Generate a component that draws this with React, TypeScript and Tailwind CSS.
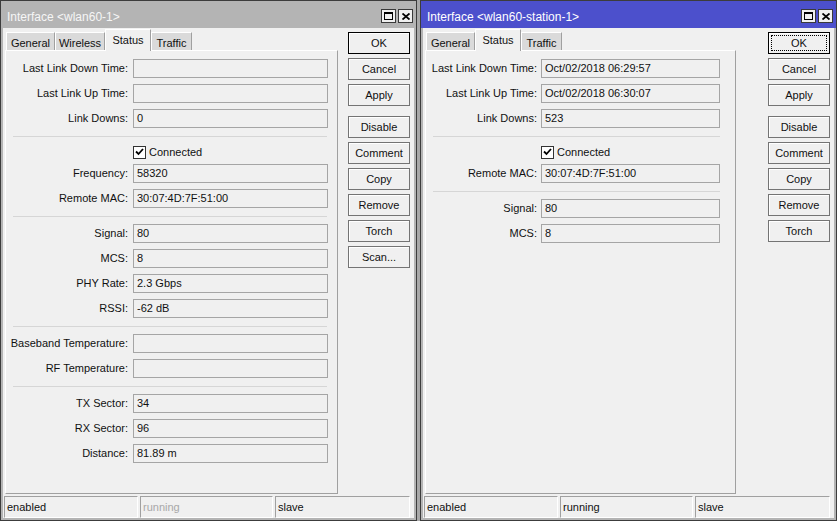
import React from "react";

type Row =
  | { kind: "field"; label: string; value: string }
  | { kind: "sep" }
  | { kind: "check"; label: string };

const f = (label: string, value = ""): Row => ({ kind: "field", label, value });
const sep: Row = { kind: "sep" };

const leftRows: Row[] = [
  f("Last Link Down Time:"),
  f("Last Link Up Time:"),
  f("Link Downs:", "0"),
  sep,
  { kind: "check", label: "Connected" },
  f("Frequency:", "58320"),
  f("Remote MAC:", "30:07:4D:7F:51:00"),
  sep,
  f("Signal:", "80"),
  f("MCS:", "8"),
  f("PHY Rate:", "2.3 Gbps"),
  f("RSSI:", "-62 dB"),
  sep,
  f("Baseband Temperature:"),
  f("RF Temperature:"),
  sep,
  f("TX Sector:", "34"),
  f("RX Sector:", "96"),
  f("Distance:", "81.89 m"),
];

const rightRows: Row[] = [
  f("Last Link Down Time:", "Oct/02/2018 06:29:57"),
  f("Last Link Up Time:", "Oct/02/2018 06:30:07"),
  f("Link Downs:", "523"),
  sep,
  { kind: "check", label: "Connected" },
  f("Remote MAC:", "30:07:4D:7F:51:00"),
  sep,
  f("Signal:", "80"),
  f("MCS:", "8"),
];

type Tab = { name: string; w: string };

type WinProps = {
  title: string;
  active: boolean;
  tabs: Tab[];
  current: string;
  rows: Row[];
  panelW: string;
  labelW: string;
  inputW: string;
  inputGap: string;
  sepW: string;
  buttons: string[];
  runningDim: boolean;
};

function TitleButtons() {
  return (
    <div className="flex gap-[2px] pt-[3px]">
      <div className="flex h-[14px] w-[15px] items-center justify-center border border-[#3a3a3a] bg-[#f0f0f0]">
        <svg width="9" height="8" viewBox="0 0 9 8">
          <rect x="0.5" y="0.5" width="8" height="7" fill="none" stroke="#000" />
          <rect x="0" y="0" width="9" height="2" fill="#000" />
        </svg>
      </div>
      <div className="flex h-[14px] w-[15px] items-center justify-center border border-[#3a3a3a] bg-[#f0f0f0]">
        <svg width="8" height="7" viewBox="0 0 8 7">
          <path d="M0.5 0.5 L7.5 6.5 M7.5 0.5 L0.5 6.5" stroke="#000" strokeWidth="1.8" />
        </svg>
      </div>
    </div>
  );
}

function Field({ label, value, labelW, inputW, inputGap }: { label: string; value: string; labelW: string; inputW: string; inputGap: string }) {
  return (
    <div className="mb-[6px] flex h-[19px] shrink-0 items-center">
      <div className={`${labelW} shrink-0 whitespace-nowrap text-right text-[#111]`}>{label}</div>
      <div className={`${inputGap} ${inputW} h-[19px] shrink-0 border border-[#a5a5a5] bg-[#f0f0f0] pl-[3px] leading-[17px] text-[#111]`}>
        {value}
      </div>
    </div>
  );
}

function Check({ label, labelW, inputGap }: { label: string; labelW: string; inputGap: string }) {
  return (
    <div className="mb-[4px] flex h-[16px] shrink-0 items-center">
      <div className={`${labelW} shrink-0`} />
      <div className={`${inputGap} flex items-center`}>
        <div className="flex h-[13px] w-[13px] items-center justify-center border border-[#333] bg-white">
          <svg width="9" height="8" viewBox="0 0 9 8">
            <path d="M1 3.5 L3.5 6 L8 1" fill="none" stroke="#000" strokeWidth="1.8" />
          </svg>
        </div>
        <span className="ml-[3px] text-[#111]">{label}</span>
      </div>
    </div>
  );
}

function Window(p: WinProps) {
  return (
    <div className="flex h-[521px] w-[417px] shrink-0 flex-col border border-[#3c3c3c] bg-[#b4b4b4]">
      <div
        className={`flex h-[27px] shrink-0 items-center justify-between pl-[6px] pr-[3px] ${
          p.active ? "bg-[#4c50cc] text-white" : "bg-[#b4b4b4] text-[#f6f6f6]"
        }`}
      >
        <span className="pt-[5px] text-[12px]">{p.title}</span>
        <TitleButtons />
      </div>
      <div className="mx-[2px] flex h-[490px] flex-col bg-[#f0f0f0] pl-[2px] pr-[4px]">
        <div className="flex flex-1">
          <div className={`flex ${p.panelW} flex-col`}>
            <div className="mt-px flex h-[21px] items-end pl-px">
              {p.tabs.map((t) =>
                t.name === p.current ? (
                  <div
                    key={t.name}
                    className={`relative z-10 -mb-px h-[22px] ${t.w} border-l border-r border-t border-l-white border-r-[#a0a0a0] border-t-white bg-[#f0f0f0] pt-[2px] text-center text-[#111]`}
                  >
                    {t.name}
                  </div>
                ) : (
                  <div
                    key={t.name}
                    className={`h-[18px] ${t.w} border-l border-r border-t border-l-white border-r-[#a0a0a0] border-t-white bg-[#dadada] pt-[2px] text-center text-[#111]`}
                  >
                    {t.name}
                  </div>
                )
              )}
            </div>
            <div className="flex h-[444px] flex-col border border-b-[#a0a0a0] border-l-white border-r-[#a0a0a0] border-t-white pt-[8px]">
              {p.rows.map((r, i) =>
                r.kind === "field" ? (
                  <Field key={i} label={r.label} value={r.value} labelW={p.labelW} inputW={p.inputW} inputGap={p.inputGap} />
                ) : r.kind === "check" ? (
                  <Check key={i} label={r.label} labelW={p.labelW} inputGap={p.inputGap} />
                ) : (
                  <div key={i} className={`mb-[7px] ml-[7px] mt-[2px] h-px shrink-0 ${p.sepW} bg-[#d6d6d6]`} />
                )
              )}
            </div>
          </div>
          <div className="ml-auto mt-[4px] flex w-[62px] flex-col">
            {p.buttons.map((b, i) => {
              const ok = b === "OK";
              return (
                <div
                  key={b}
                  className={`relative h-[22px] w-[62px] text-center leading-[20px] text-[#111] ${
                    ok ? "border border-black" : "border border-[#747474]"
                  } bg-[#f0f0f0] shadow-[inset_1px_1px_0_#fff] ${i === 3 ? "mt-[10px]" : i > 0 ? "mt-[4px]" : ""}`}
                >
                  {ok && p.active && (
                    <span className="absolute inset-[2px] border border-dotted border-black" />
                  )}
                  <span className="relative">{b}</span>
                </div>
              );
            })}
          </div>
        </div>
        <div className="-ml-px mt-[2px] flex h-[22px] shrink-0 gap-[2px]">
          <div className="w-[134px] border border-b-white border-l-[#a0a0a0] border-r-white border-t-[#a0a0a0] pl-[2px] leading-[20px] text-[#111]">
            enabled
          </div>
          <div
            className={`w-[133px] border border-b-white border-l-[#a0a0a0] border-r-white border-t-[#a0a0a0] pl-[2px] leading-[20px] ${
              p.runningDim ? "text-[#a8a8a8]" : "text-[#111]"
            }`}
          >
            running
          </div>
          <div className="flex-1 border border-b-white border-l-[#a0a0a0] border-r-white border-t-[#a0a0a0] pl-[2px] leading-[20px] text-[#111]">
            slave
          </div>
        </div>
      </div>
    </div>
  );
}

export default function App() {
  return (
    <div className="flex h-[521px] w-[837px] gap-[3px] overflow-hidden bg-[#a8a8a8] font-['Liberation_Sans',Arial,sans-serif] text-[11px]">
      <Window
        title="Interface <wlan60-1>"
        active={false}
        tabs={[
          { name: "General", w: "w-[49px]" },
          { name: "Wireless", w: "w-[50px]" },
          { name: "Status", w: "w-[46px]" },
          { name: "Traffic", w: "w-[41px]" },
        ]}
        current="Status"
        rows={leftRows}
        panelW="w-[333px]"
        labelW="w-[122px]"
        inputW="w-[195px]"
        inputGap="ml-[5px]"
        sepW="w-[314px]"
        buttons={["OK", "Cancel", "Apply", "Disable", "Comment", "Copy", "Remove", "Torch", "Scan..."]}
        runningDim={true}
      />
      <Window
        title="Interface <wlan60-station-1>"
        active={true}
        tabs={[
          { name: "General", w: "w-[49px]" },
          { name: "Status", w: "w-[46px]" },
          { name: "Traffic", w: "w-[41px]" },
        ]}
        current="Status"
        rows={rightRows}
        panelW="w-[311px]"
        labelW="w-[111px]"
        inputW="w-[179px]"
        inputGap="ml-[4px]"
        sepW="w-[287px]"
        buttons={["OK", "Cancel", "Apply", "Disable", "Comment", "Copy", "Remove", "Torch"]}
        runningDim={false}
      />
    </div>
  );
}
